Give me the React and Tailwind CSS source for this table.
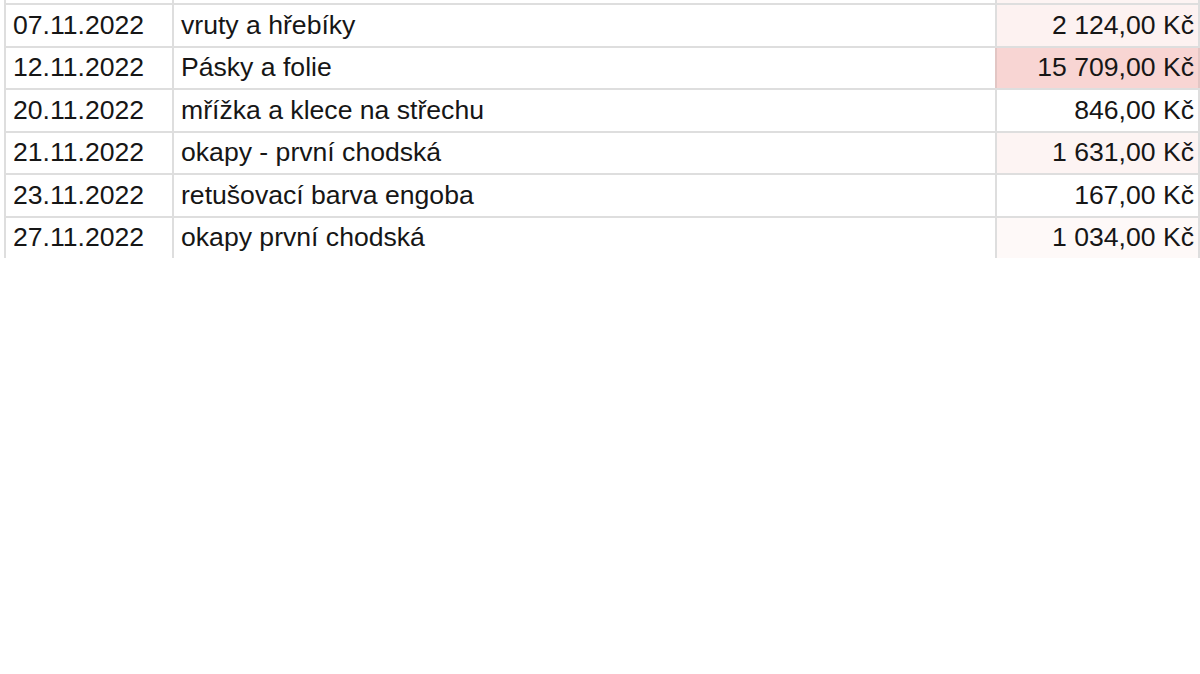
import React from "react";

const rows = [
  { d: "07.11.2022", t: "vruty a hřebíky", a: "2 124,00 Kč", bg: "bg-[#fdf2f1]", bc: "border-[#dedede]" },
  { d: "12.11.2022", t: "Pásky a folie", a: "15 709,00 Kč", bg: "bg-[#f8d5d3]", bc: "border-[#e2c6c4]" },
  { d: "20.11.2022", t: "mřížka a klece na střechu", a: "846,00 Kč", bg: "bg-white", bc: "border-[#dedede]" },
  { d: "21.11.2022", t: "okapy - první chodská", a: "1 631,00 Kč", bg: "bg-[#fdf4f3]", bc: "border-[#dedede]" },
  { d: "23.11.2022", t: "retušovací barva engoba", a: "167,00 Kč", bg: "bg-white", bc: "border-[#dedede]" },
  { d: "27.11.2022", t: "okapy první chodská", a: "1 034,00 Kč", bg: "bg-[#fef9f8]", bc: "border-[#dedede]" },
];

export default function App() {
  return (
    <div
      className="w-[1200px] h-[674px] bg-white overflow-hidden text-[#161616]"
      style={{ fontFamily: '"Liberation Sans", Arial, sans-serif' }}
    >
      <div className="ml-[4px] w-[1196px] h-[258px] overflow-hidden flex flex-col">
        <div className="flex h-[3px] shrink-0">
          <div className="w-[168px] border-l-2 border-[#dedede]" />
          <div className="w-[823px] border-l-2 border-[#dedede]" />
          <div className="flex-1 border-l-2 border-r-2 border-[#dedede] bg-[#fdf4f3]" />
        </div>
        {rows.map((r, i) => (
          <div
            key={i}
            className="flex h-[42.5px] shrink-0 border-t-2 border-[#dedede] text-[26.6px] leading-none"
          >
            <div className="w-[168px] border-l-2 border-[#dedede] flex items-center pl-[7px]">
              {r.d}
            </div>
            <div className="w-[823px] border-l-2 border-[#dedede] flex items-center pl-[7px]">
              {r.t}
            </div>
            <div
              className={`flex-1 border-l-2 border-r-2 flex items-center justify-end pr-[4px] ${r.bg} ${r.bc}`}
            >
              {r.a}
            </div>
          </div>
        ))}
      </div>
    </div>
  );
}
